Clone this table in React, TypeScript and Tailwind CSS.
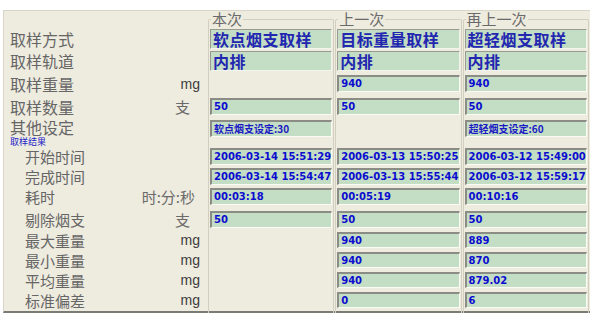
import React from "react";

type Row = {
  label: string;
  unit?: string;
  sub?: boolean;
  slot: string;
  box: string;
  kind: "big" | "num" | "cjk";
  vals: (string | null)[];
};

const rows: Row[] = [
  { label: "取样方式", slot: "h-[22px]", box: "h-[20px]", kind: "big", vals: ["软点烟支取样", "目标重量取样", "超轻烟支取样"] },
  { label: "取样轨道", slot: "h-[24px]", box: "h-[20px]", kind: "big", vals: ["内排", "内排", "内排"] },
  { label: "取样重量", unit: "mg", slot: "h-[23px]", box: "h-[17px]", kind: "num", vals: [null, "940", "940"] },
  { label: "取样数量", unit: "支", slot: "h-[22px]", box: "h-[17px]", kind: "num", vals: ["50", "50", "50"] },
  { label: "其他设定", slot: "h-[28px]", box: "h-[17px]", kind: "cjk", vals: ["软点烟支设定:30", null, "超轻烟支设定:60"] },
  { label: "开始时间", sub: true, slot: "h-[20px]", box: "h-[17px]", kind: "num", vals: ["2006-03-14 15:51:29", "2006-03-13 15:50:25", "2006-03-12 15:49:00"] },
  { label: "完成时间", sub: true, slot: "h-[20px]", box: "h-[17px]", kind: "num", vals: ["2006-03-14 15:54:47", "2006-03-13 15:55:44", "2006-03-12 15:59:17"] },
  { label: "耗时", unit: "时:分:秒", sub: true, slot: "h-[23px]", box: "h-[17px]", kind: "num", vals: ["00:03:18", "00:05:19", "00:10:16"] },
  { label: "剔除烟支", unit: "支", sub: true, slot: "h-[21px]", box: "h-[17px]", kind: "num", vals: ["50", "50", "50"] },
  { label: "最大重量", unit: "mg", sub: true, slot: "h-[20px]", box: "h-[16px]", kind: "num", vals: [null, "940", "889"] },
  { label: "最小重量", unit: "mg", sub: true, slot: "h-[20px]", box: "h-[16px]", kind: "num", vals: [null, "940", "870"] },
  { label: "平均重量", unit: "mg", sub: true, slot: "h-[20px]", box: "h-[16px]", kind: "num", vals: [null, "940", "879.02"] },
  { label: "标准偏差", unit: "mg", sub: true, slot: "h-[20px]", box: "h-[16px]", kind: "num", vals: [null, "0", "6"] },
];

const columns = [
  { title: "本次", width: "w-[126px]" },
  { title: "上一次", width: "w-[127px]" },
  { title: "再上一次", width: "w-[127px]" },
];

const cjk = "font-['Noto_Sans_CJK_SC',sans-serif]";

function Unit({ unit }: { unit?: string }) {
  if (!unit) return null;
  if (unit === "mg") {
    return (
      <span className="font-['Liberation_Sans',Arial,sans-serif] text-[14px] leading-none text-[#3c3c3c] pr-[8px]">
        mg
      </span>
    );
  }
  return (
    <span className={`${cjk} text-[15px] leading-none text-[#6a6a6a] ${unit === "支" ? "pr-[18px]" : "pr-[13px]"}`}>
      {unit}
    </span>
  );
}

function Field({ row, value }: { row: Row; value: string | null }) {
  if (value === null) return <div className={row.slot} />;
  const big = row.kind === "big";
  return (
    <div className={row.slot}>
      <div
        className={`${row.box} flex items-center whitespace-nowrap bg-[#c3dec4] pl-[2px] ${
          big
            ? "border border-t-[#9a9a92] border-l-[#9a9a92] border-b-[#f4f4ee] border-r-[#f4f4ee]"
            : "border-t-2 border-l-2 border-b border-r border-t-[#8c8c86] border-l-[#8c8c86] border-b-[#fbfbf6] border-r-[#fbfbf6]"
        }`}
      >
        {big ? (
          <span className={`${cjk} text-[16px] font-bold leading-none text-[#2226b0] tracking-[0.5px]`}>{value}</span>
        ) : row.kind === "cjk" ? (
          <span className={`${cjk} text-[10px] font-bold leading-none text-[#1a1ac4]`}>{value}</span>
        ) : (
          <span className="font-['DejaVu_Sans',sans-serif] text-[10px] font-bold leading-none text-[#0c0cd0]">{value}</span>
        )}
      </div>
    </div>
  );
}

export default function App() {
  return (
    <div className="w-[592px] h-[317px] bg-white overflow-hidden">
      <div className="mt-[10px] ml-[3px] w-[587px] h-[303px] bg-[#eeebdf] border-t border-l border-[#d9d6c9] border-b-2 border-b-[#7b7b76] flex">
        {/* Labels */}
        <div className="w-[205px] pt-[18px]">
          {rows.map((row, i) => (
            <div key={i} className={row.slot}>
              <div className={`${row.box} flex items-center justify-between`}>
                <span
                  className={`${cjk} leading-none text-[#666666] whitespace-nowrap ${
                    row.sub ? "pl-[21px] text-[15px]" : "pl-[6px] text-[16px]"
                  } ${i === 4 ? "mb-[4px]" : ""}`}
                >
                  {row.label}
                </span>
                <Unit unit={row.unit} />
              </div>
              {i === 4 && (
                <div className={`${cjk} pl-[6px] text-[9px] leading-[9px] text-[#2222c8]`}>取样结果</div>
              )}
            </div>
          ))}
        </div>

        {/* Result groups */}
        {columns.map((col, c) => (
          <fieldset
            key={col.title}
            className={`${col.width} mr-[1px] border border-b-0 border-[#d2cfc0] rounded-t-[2px] px-[1px] h-[302px]`}
          >
            <legend className={`${cjk} ml-[1px] px-[1px] text-[15px] leading-[16px] text-[#6a6a6a]`}>
              {col.title}
            </legend>
            <div className="pt-[2px]">
              {rows.map((row, i) => (
                <Field key={i} row={row} value={row.vals[c]} />
              ))}
            </div>
          </fieldset>
        ))}
      </div>
    </div>
  );
}
